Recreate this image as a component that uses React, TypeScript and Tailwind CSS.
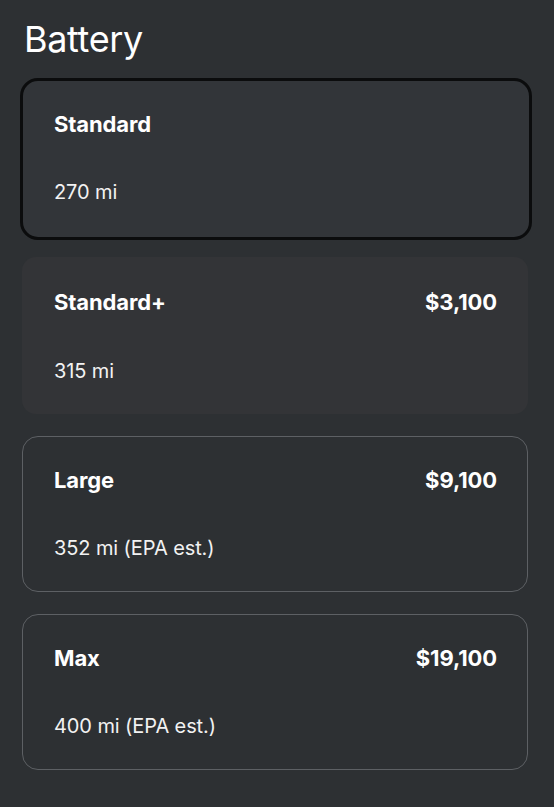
const options = [
  { name: 'Standard', range: '270 mi', price: '', selected: true },
  { name: 'Standard+', range: '315 mi', price: '$3,100', hover: true },
  { name: 'Large', range: '352 mi (EPA est.)', price: '$9,100' },
  { name: 'Max', range: '400 mi (EPA est.)', price: '$19,100' },
]

function OptionCard({ option }: { option: (typeof options)[number] }) {
  let cls = 'flex flex-col justify-between '
  if (option.selected) {
    cls += 'h-[162px] -ml-[2px] -mr-[4px] rounded-[18px] border-[3px] border-[#0b0c0d] bg-[#323539] pl-[31px] pr-[31px] pt-[29px] pb-[31px]'
  } else if (option.hover) {
    cls += 'mt-[17px] h-[157px] rounded-[14px] bg-[#333437] pl-[32px] pr-[31px] pt-[31px] pb-[29px]'
  } else {
    cls += 'mt-[22px] h-[156px] rounded-[16px] border border-[#5d6064] pl-[31px] pr-[30px] pt-[29px] pb-[29px]'
  }

  return (
    <div className={cls}>
      <div className="flex items-center justify-between text-[22px] font-bold leading-[28px] tracking-[-0.005em] text-white">
        <span>{option.name}</span>
        {option.price && <span>{option.price}</span>}
      </div>
      <div className="text-[20px] leading-[28px] tracking-[-0.005em] text-[#f2f2f2]">{option.range}</div>
    </div>
  )
}

export default function App() {
  return (
    <div
      className="min-h-[807px] w-[554px] bg-[#2d3033] pl-[22px] pr-[26px] pt-[18px]"
      style={{ fontFamily: 'Inter, "Noto Sans", sans-serif' }}
    >
      <h1 className="mb-[17px] pl-[2px] text-[36px] font-normal leading-[43px] tracking-[-0.01em] text-white">
        Battery
      </h1>
      <div className="flex flex-col">
        {options.map((o) => (
          <OptionCard key={o.name} option={o} />
        ))}
      </div>
    </div>
  )
}
